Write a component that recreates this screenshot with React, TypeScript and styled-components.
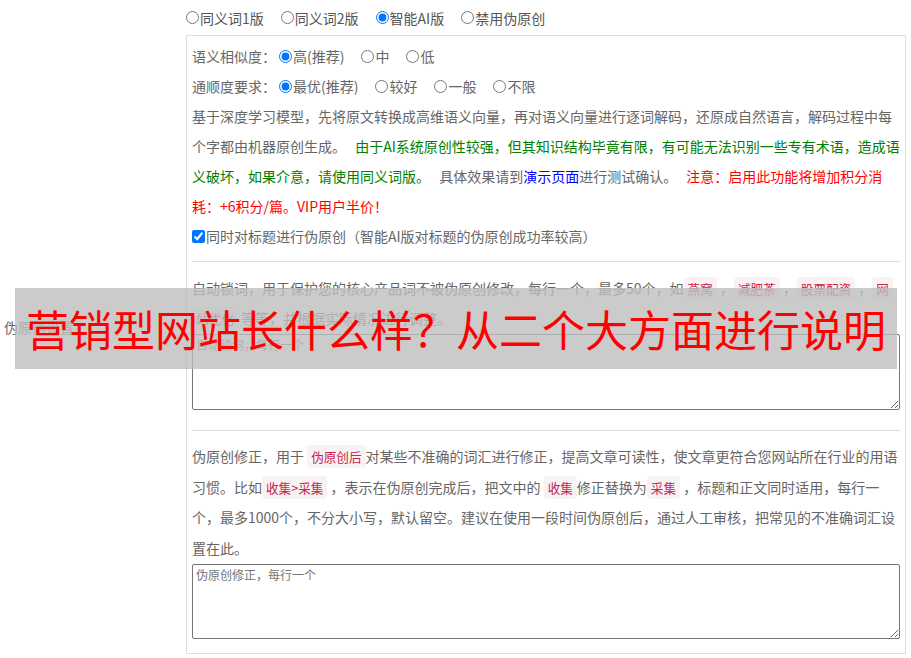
import styled, { createGlobalStyle } from 'styled-components';

const GlobalStyle = createGlobalStyle`
  html, body {
    margin: 0;
    padding: 0;
    background: #fff;
  }
  body {
    font-family: "Noto Sans CJK SC", "Noto Sans", sans-serif;
    font-size: 14px;
    color: #666;
  }
`;

const Page = styled.div`
  position: relative;
  width: 911px;
  height: 658px;
  overflow: hidden;
`;

const Row = styled.div`
  display: grid;
  grid-template-columns: 186px 720px;
`;

const LabelCell = styled.div`
  display: flex;
  align-items: center;
  padding-left: 4px;
  font-size: 14px;
  color: #666;
`;

const ModeBar = styled.div`
  height: 35px;
  display: flex;
  align-items: center;
  margin-left: -3px;
  color: #555;
`;

const Panel = styled.div`
  border: 1px solid #ddd;
  padding: 5px 5px 14px 5px;
`;

const OptionRow = styled.div`
  display: flex;
  align-items: center;
  height: 30px;
`;

const Option = styled.label`
  display: inline-flex;
  align-items: center;
  margin-right: 14px;
  white-space: nowrap;

  input {
    margin: 0 1px 0 3px;
    width: 13px;
    height: 13px;
  }
`;

const CheckRow = styled.label`
  display: flex;
  align-items: center;
  height: 30px;

  input {
    margin: 0 1px 0 0;
    width: 13px;
    height: 13px;
  }
`;

const Text = styled.p<{ $lh?: number; $ws?: number }>`
  margin: 0;
  line-height: ${(p) => p.$lh ?? 30}px;
  word-spacing: ${(p) => p.$ws ?? 0}px;
`;

const Tone = styled.span<{ $c: string }>`
  color: ${(p) => p.$c};
`;

const Code = styled.span`
  padding: 2px 4px;
  font-size: 90%;
  line-height: 1;
  color: #c7254e;
  background: #f9f2f4;
  border-radius: 4px;
  -webkit-box-decoration-break: clone;
  box-decoration-break: clone;
`;

const Divider = styled.div<{ $top: number; $bottom: number }>`
  height: 1px;
  background: #ddd;
  margin: ${(p) => p.$top}px 0 ${(p) => p.$bottom}px;
`;

const Field = styled.textarea<{ $h: number; $mt?: number }>`
  display: block;
  box-sizing: border-box;
  width: 100%;
  height: ${(p) => p.$h}px;
  margin: ${(p) => p.$mt ?? 0}px 0 0;
  padding: 2px 3px;
  border: 1px solid #767676;
  border-radius: 2px;
  font-family: "Noto Sans CJK SC", "Noto Sans", sans-serif;
  font-size: 12px;
  line-height: 16px;
  color: #333;
  resize: vertical;

  &::placeholder {
    color: #757575;
  }
`;

const Banner = styled.div`
  position: absolute;
  left: 15px;
  top: 288px;
  width: 882px;
  height: 81px;
  background: rgba(190, 190, 190, 0.8);
  display: flex;
  align-items: center;
  justify-content: center;
  color: #ff0000;
  font-size: 43px;
  line-height: 1;
  white-space: nowrap;
`;

export default function App() {
  return (
    <Page>
      <GlobalStyle />
      <Row>
        <LabelCell>伪原创设置</LabelCell>
        <div>
          <ModeBar>
            <Option><input type="radio" name="mode" />同义词1版</Option>
            <Option><input type="radio" name="mode" />同义词2版</Option>
            <Option><input type="radio" name="mode" defaultChecked />智能AI版</Option>
            <Option><input type="radio" name="mode" />禁用伪原创</Option>
          </ModeBar>

          <Panel>
            <OptionRow>
              语义相似度：
              <Option><input type="radio" name="sim" defaultChecked />高(推荐)</Option>
              <Option><input type="radio" name="sim" />中</Option>
              <Option><input type="radio" name="sim" />低</Option>
            </OptionRow>
            <OptionRow>
              通顺度要求：
              <Option><input type="radio" name="flu" defaultChecked />最优(推荐)</Option>
              <Option><input type="radio" name="flu" />较好</Option>
              <Option><input type="radio" name="flu" />一般</Option>
              <Option><input type="radio" name="flu" />不限</Option>
            </OptionRow>

            <Text $ws={6}>
              基于深度学习模型，先将原文转换成高维语义向量，再对语义向量进行逐词解码，还原成自然语言，解码过程中每个字都由机器原创生成。{' '}
              <Tone $c="#008000">
                由于AI系统原创性较强，但其知识结构毕竟有限，有可能无法识别一些专有术语，造成语义破坏，如果介意，请使用同义词版。
              </Tone>{' '}
              具体效果请到<Tone $c="#0000ff">演示页面</Tone>进行测试确认。{' '}
              <Tone $c="#ff0000">注意：启用此功能将增加积分消耗：+6积分/篇。VIP用户半价！</Tone>
            </Text>

            <CheckRow>
              <input type="checkbox" defaultChecked />
              同时对标题进行伪原创（智能AI版对标题的伪原创成功率较高）
            </CheckRow>

            <Divider $top={10} $bottom={11} />

            <Text>
              自动锁词，用于保护您的核心产品词不被伪原创修改，每行一个，最多50个，如<Code>燕窝</Code> ，<Code>减肥茶</Code> ，<Code>股票配资</Code> ，<Code>网站优化</Code> 等等，并根据实际情况进行调整。
            </Text>
            <Field $h={76} $mt={1} placeholder="自动锁词，每行一个" />

            <Divider $top={20} $bottom={10} />

            <Text $lh={30.7}>
              伪原创修正，用于 <Code>伪原创后</Code>对某些不准确的词汇进行修正，提高文章可读性，使文章更符合您网站所在行业的用语习惯。比如<Code>收集&gt;采集</Code> ，表示在伪原创完成后，把文中的 <Code>收集</Code>修正替换为<Code>采集</Code> ，标题和正文同时适用，每行一个，最多1000个，不分大小写，默认留空。建议在使用一段时间伪原创后，通过人工审核，把常见的不准确词汇设置在此。
            </Text>
            <Field $h={75} placeholder="伪原创修正，每行一个" />
          </Panel>
        </div>
      </Row>

      <Banner>营销型网站长什么样？从二个大方面进行说明</Banner>
    </Page>
  );
}
